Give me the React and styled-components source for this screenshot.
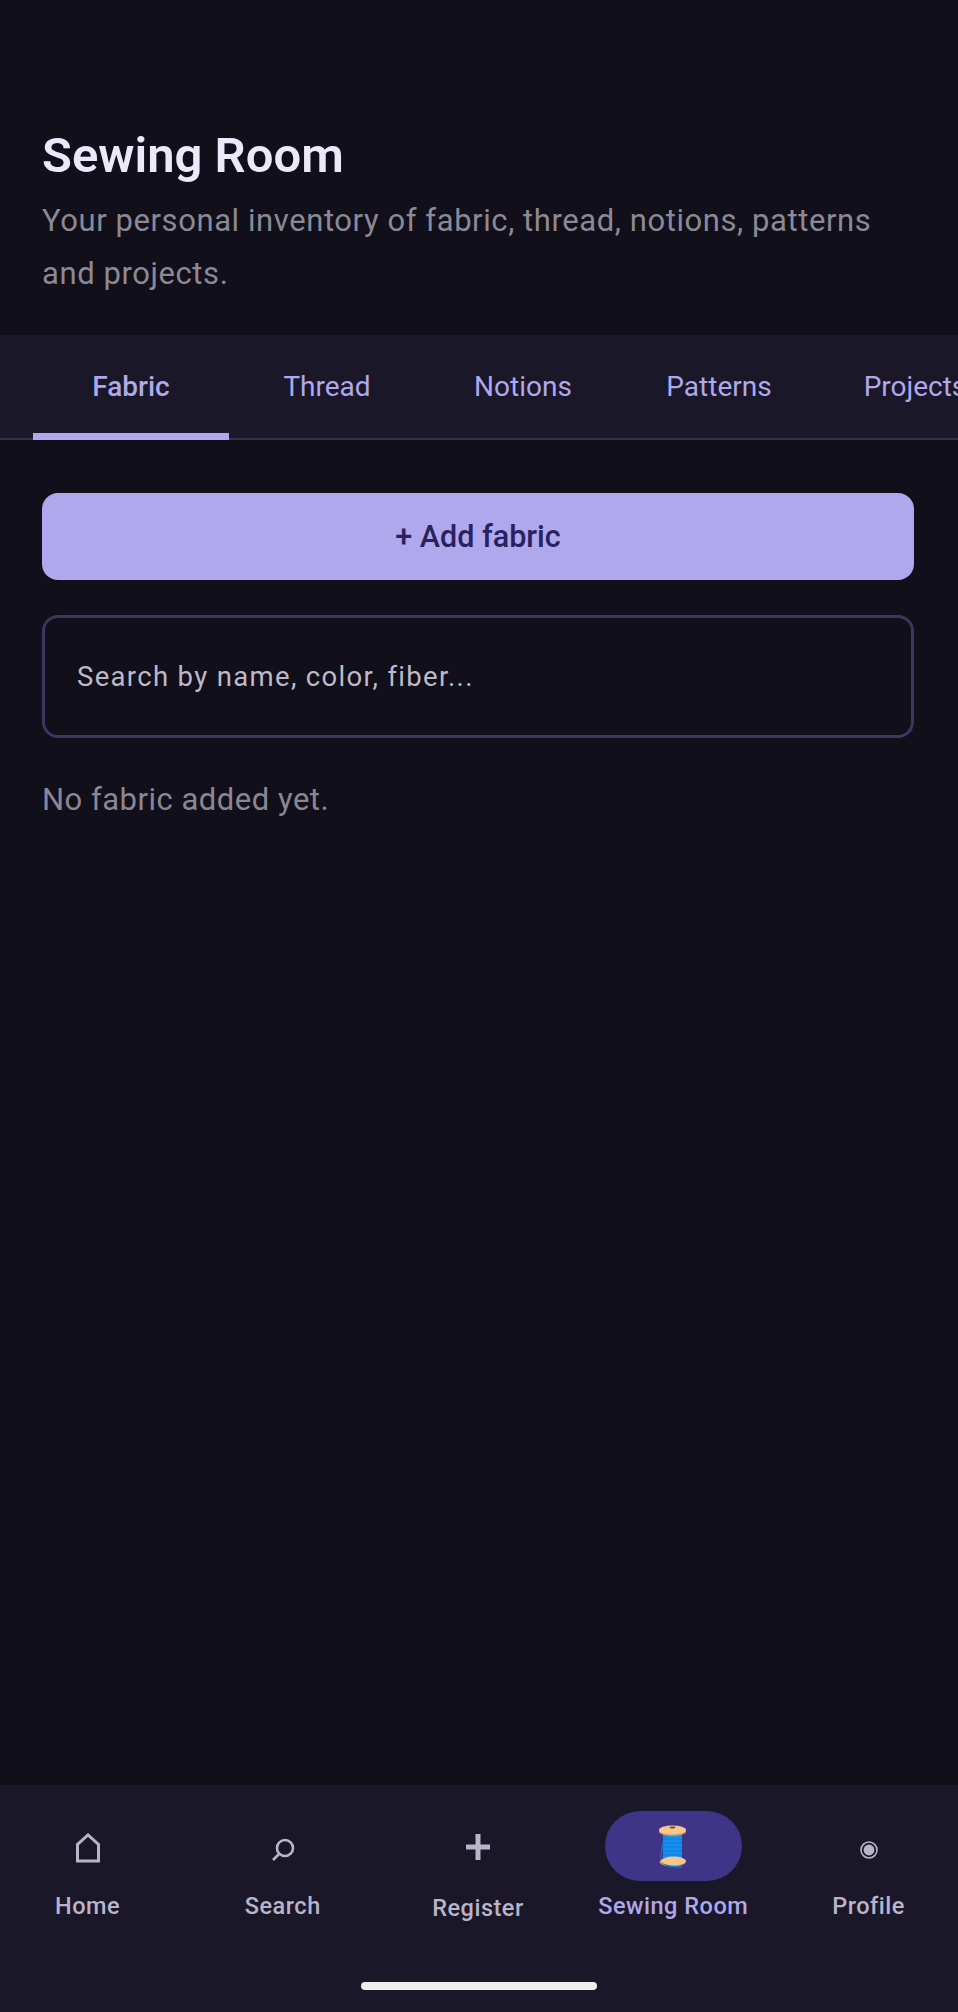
import React from 'react';
import styled, { createGlobalStyle } from 'styled-components';

const GlobalStyle = createGlobalStyle`
html, body {
  margin: 0;
  padding: 0;
  background: #110f19;
}
* {
  box-sizing: border-box;
}
`;

const Screen = styled.div`
width: 958px;
height: 2012px;
display: flex;
flex-direction: column;
overflow: hidden;
background: #110f19;
font-family: Roboto, "Noto Sans", sans-serif;
`;

const Header = styled.header`
padding: 126px 42px 0;
height: 335px;
`;

const Title = styled.h1`
margin: 0;
font-size: 49px;
line-height: 60px;
font-weight: 600;
color: #ece8fa;
`;

const Subtitle = styled.p`
margin: 8px 0 0;
font-size: 31px;
line-height: 53px;
letter-spacing: 0.58px;
color: #8c8996;
`;

const TabBar = styled.nav`
height: 105px;
display: flex;
padding-left: 33px;
overflow: hidden;
background: #1a1728;
box-shadow: inset 0 -2px 0 #37304f;
`;

const Tab = styled.div`
flex: 0 0 196px;
height: 105px;
padding-top: 5px;
display: flex;
align-items: center;
justify-content: center;
font-size: 28px;
font-weight: ${(p) => (p.$active ? 500 : 400)};
color: #b0a8ec;
border-bottom: 7px solid ${(p) => (p.$active ? '#b0a8ec' : 'transparent')};
`;

const Content = styled.main`
flex: 1;
display: flex;
flex-direction: column;
padding: 53px 44px 0 42px;
`;

const AddButton = styled.button`
height: 87px;
border: 0;
border-radius: 16px;
background: #b0a8ec;
color: #2a2160;
font-family: inherit;
font-size: 30.5px;
font-weight: 500;
`;

const SearchInput = styled.input`
height: 123px;
margin-top: 35px;
padding: 0 32px;
border: 3px solid #3d3660;
border-radius: 16px;
background: transparent;
font-family: inherit;
font-size: 27.5px;
letter-spacing: 1.33px;
outline: none;
&::placeholder {
  color: #bdb9c8;
  opacity: 1;
}
`;

const EmptyText = styled.p`
margin: 42px 0 0;
font-size: 31px;
line-height: 40px;
letter-spacing: 0.5px;
color: #8a8795;
`;

const BottomNav = styled.footer`
height: 227px;
background: #1a1728;
display: flex;
flex-direction: column;
`;

const NavRow = styled.div`
display: grid;
grid-template-columns: repeat(5, 195.25px);
justify-content: center;
padding: 26px 2px 0 0;
`;

const NavItem = styled.div`
display: flex;
flex-direction: column;
align-items: center;
`;

const IconWrap = styled.div`
width: 137px;
height: 70px;
display: flex;
align-items: center;
justify-content: center;
border-radius: 35px;
background: ${(p) => (p.$active ? '#3e3589' : 'transparent')};
`;

const NavLabel = styled.span`
margin-top: ${(p) => (p.$low ? '10px' : '8px')};
font-size: 23.5px;
line-height: 34px;
font-weight: 500;
letter-spacing: 0.5px;
white-space: nowrap;
color: ${(p) => (p.$active ? '#b0a8ec' : '#b9b4c9')};
`;

const HomeBar = styled.div`
width: 236px;
height: 8px;
margin: 57px auto 0;
border-radius: 4px;
background: #eeeeee;
`;

const HomeIcon = () => (
  <svg width="26" height="30" viewBox="0 0 26 30" fill="none" style={{ marginTop: 4 }}>
    <path d="M2.5 28V11.5L13 2l10.500 9.500V28Z" stroke="#b9b4c9" strokeWidth="3" />
  </svg>
);

const SearchIcon = () => (
  <svg width="24" height="24" viewBox="0 0 24 24" fill="none" style={{ marginTop: 7 }}>
    <circle cx="14" cy="10" r="8" stroke="#b9b4c9" strokeWidth="2.6" />
    <path d="M8 16l-6 6" stroke="#b9b4c9" strokeWidth="2.6" />
  </svg>
);

const PlusIcon = () => (
  <svg width="26" height="26" viewBox="0 0 26 26" style={{ marginTop: 2 }}>
    <path d="M13 0v26M1 13h24" stroke="#b9b4c9" strokeWidth="5" />
  </svg>
);

const SpoolIcon = () => (
  <svg width="32" height="46" viewBox="0 0 32 46" fill="none">
    <ellipse cx="15.5" cy="39" rx="13" ry="4.6" fill="#c98f55" />
    <rect x="6" y="8" width="19" height="29" fill="#1690f0" />
    <path d="M6 12h19M6 16h19M6 20h19M6 24h19M6 28h19M6 32h19" stroke="#0f78d6" strokeWidth="1" />
    <path d="M6 20C5 28 2 34 6 40c4 4 12 4 19 4" stroke="#0d76d2" strokeWidth="1.3" />
    <ellipse cx="15.5" cy="8.500" rx="13.500" ry="4.600" fill="#cf9a62" />
    <ellipse cx="15.5" cy="7" rx="13.500" ry="4.600" fill="#f5c68e" />
    <ellipse cx="15.5" cy="4.600" rx="3" ry="1" fill="#6e4a2c" />
    <ellipse cx="16.5" cy="38" rx="12.500" ry="4.400" fill="#f5c68e" />
  </svg>
);

const ProfileIcon = () => (
  <svg width="18" height="18" viewBox="0 0 18 18" fill="none" style={{ marginTop: 8 }}>
    <circle cx="9" cy="9" r="8" stroke="#b9b4c9" strokeWidth="1.6" />
    <circle cx="9" cy="9" r="5.400" fill="#b9b4c9" />
  </svg>
);

const tabs = ['Fabric', 'Thread', 'Notions', 'Patterns', 'Projects'];

const navItems = [
  { label: 'Home', icon: <HomeIcon /> },
  { label: 'Search', icon: <SearchIcon /> },
  { label: 'Register', icon: <PlusIcon />, low: true },
  { label: 'Sewing Room', icon: <SpoolIcon />, active: true },
  { label: 'Profile', icon: <ProfileIcon /> },
];

const App = () => (
  <Screen>
    <GlobalStyle />
    <Header>
      <Title>Sewing Room</Title>
      <Subtitle>Your personal inventory of fabric, thread, notions, patterns and projects.</Subtitle>
    </Header>
    <TabBar>
      {tabs.map((tab) => (
        <Tab key={tab} $active={tab === 'Fabric'}>{tab}</Tab>
      ))}
    </TabBar>
    <Content>
      <AddButton>+ Add fabric</AddButton>
      <SearchInput placeholder="Search by name, color, fiber..." />
      <EmptyText>No fabric added yet.</EmptyText>
    </Content>
    <BottomNav>
      <NavRow>
        {navItems.map((item) => (
          <NavItem key={item.label}>
            <IconWrap $active={item.active}>{item.icon}</IconWrap>
            <NavLabel $active={item.active} $low={item.low}>{item.label}</NavLabel>
          </NavItem>
        ))}
      </NavRow>
      <HomeBar />
    </BottomNav>
  </Screen>
);

export default App;
